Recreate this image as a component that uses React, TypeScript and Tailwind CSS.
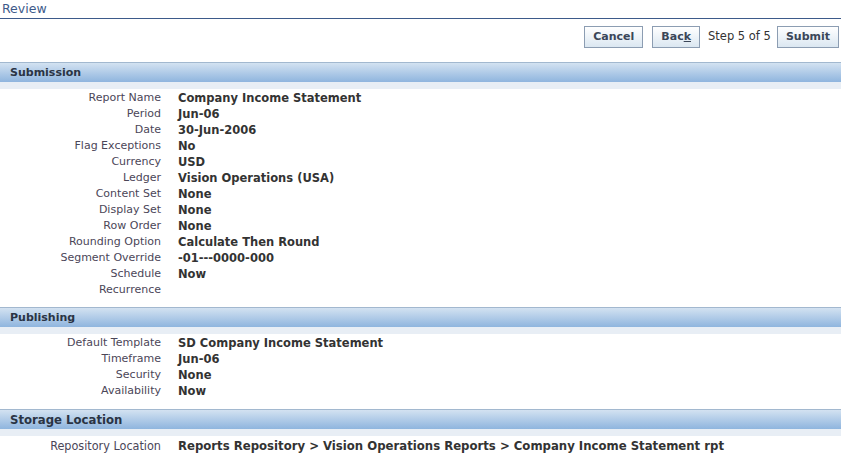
import React from 'react';

const submission: [string, string][] = [
  ['Report Name', 'Company Income Statement'],
  ['Period', 'Jun-06'],
  ['Date', '30-Jun-2006'],
  ['Flag Exceptions', 'No'],
  ['Currency', 'USD'],
  ['Ledger', 'Vision Operations (USA)'],
  ['Content Set', 'None'],
  ['Display Set', 'None'],
  ['Row Order', 'None'],
  ['Rounding Option', 'Calculate Then Round'],
  ['Segment Override', '-01---0000-000'],
  ['Schedule', 'Now'],
  ['Recurrence', ''],
];

const publishing: [string, string][] = [
  ['Default Template', 'SD Company Income Statement'],
  ['Timeframe', 'Jun-06'],
  ['Security', 'None'],
  ['Availability', 'Now'],
];

function SectionHeader({ title, condensed }: { title: string; condensed?: boolean }) {
  return (
    <div>
      <div
        className={`h-[20px] border-t border-[#a2b8cf] bg-gradient-to-b from-[#d3e2f1] to-[#8fb5de] pl-[10px] font-bold leading-[19px] text-[#2a3444] ${
          condensed ? "font-['DejaVu_Sans_Condensed',sans-serif] text-[13px]" : 'text-[11px]'
        }`}
      >
        {title}
      </div>
      <div className="h-[7px] bg-[#e8eef5]" />
    </div>
  );
}

function Rows({ rows }: { rows: [string, string][] }) {
  return (
    <div className="pt-[1px]">
      {rows.map(([label, value]) => (
        <div key={label} className="flex h-[16px] items-center leading-[16px]">
          <div className="w-[162px] pr-[1px] text-right text-[11px] text-[#4b4658]">{label}</div>
          <div className="pl-[16px] text-[11.5px] font-bold text-[#333]">{value}</div>
        </div>
      ))}
    </div>
  );
}

function Btn({ children }: { children: React.ReactNode }) {
  return (
    <button className="h-[22px] border border-[#8c9db2] bg-gradient-to-b from-white to-[#dbe7f1] px-[8px] text-[11px] font-bold leading-[20px] text-[#3a4658]">
      {children}
    </button>
  );
}

export default function App() {
  return (
    <div className="h-[453px] w-[841px] overflow-hidden bg-white font-['DejaVu_Sans',sans-serif]">
      <div className="border-b border-[#3d5a8a] pl-[2px] text-[12.5px] leading-[18px] text-[#3d5a8a]">Review</div>

      <div className="mt-[7px] flex items-center justify-end pr-[2px]">
        <Btn>Cancel</Btn>
        <div className="w-[9px]" />
        <Btn>
          Bac<span className="underline">k</span>
        </Btn>
        <span className="ml-[8px] mr-[6px] text-[11.5px] text-[#333]">Step 5 of 5</span>
        <Btn>Submit</Btn>
      </div>

      <div className="mt-[14px]">
        <SectionHeader title="Submission" />
        <Rows rows={submission} />
      </div>

      <div className="mt-[9px]">
        <SectionHeader title="Publishing" />
        <Rows rows={publishing} />
      </div>

      <div className="mt-[10px]">
        <SectionHeader title="Storage Location" condensed />
        <div className="flex h-[18px] items-center pt-[2px] font-['DejaVu_Sans_Condensed',sans-serif]">
          <div className="w-[162px] pr-[1px] text-right text-[12.5px] text-[#4b4658]">Repository Location</div>
          <div className="pl-[16px] text-[13px] font-bold text-[#333]">
            Reports Repository &gt; Vision Operations Reports &gt; Company Income Statement rpt
          </div>
        </div>
      </div>
    </div>
  );
}
